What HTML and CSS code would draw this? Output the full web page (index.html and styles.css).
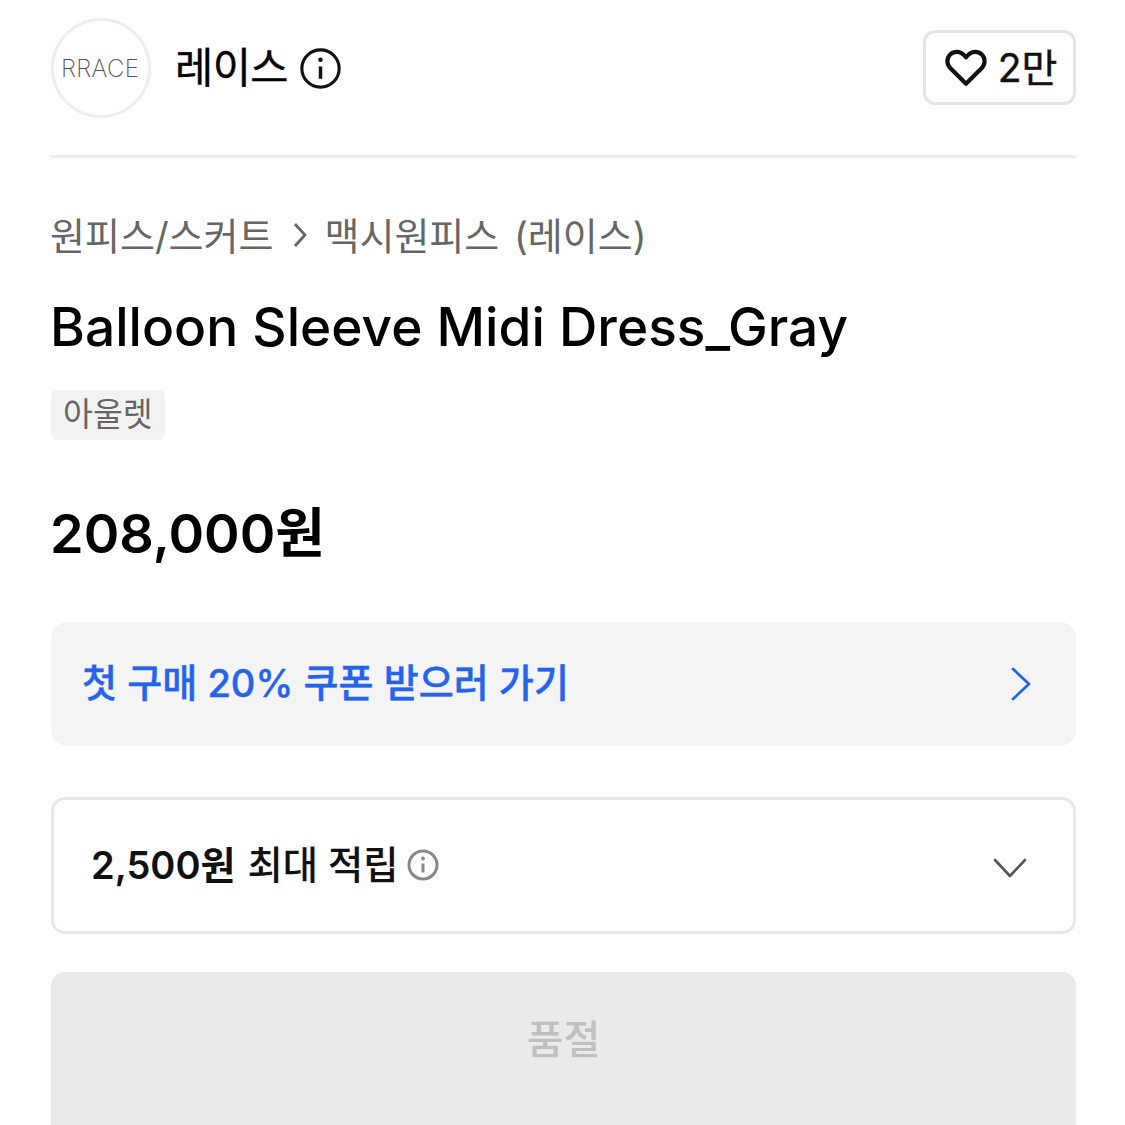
FILE: index.html
```html
<!DOCTYPE html>
<html lang="ko">
<head>
<meta charset="utf-8">
<title>Balloon Sleeve Midi Dress_Gray</title>
<link rel="stylesheet" href="styles.css">
</head>
<body>
<main class="page">
  <header class="brand">
    <div class="brand-left">
      <div class="avatar"><span class="avatar-text">RRACE</span></div>
      <span class="brand-name">레이스</span>
      <svg class="info-lg" viewBox="0 0 40 40" fill="none" stroke="#111" stroke-width="3">
        <circle cx="20" cy="20" r="18.2"/>
        <path d="M20 18v12" stroke-width="3.4"/>
        <circle cx="20" cy="11.5" r="2.2" fill="#111" stroke="none"/>
      </svg>
    </div>
    <button class="like">
      <svg class="heart" viewBox="0 0 44 40" fill="none" stroke="#111" stroke-width="4.4" stroke-linejoin="round">
        <path d="M22 36.5 5.6 20.2C1.4 16 1.4 9.6 5.4 5.8 9.4 2 15.6 2.2 19.4 6L22 8.8 24.6 6C28.4 2.2 34.6 2 38.6 5.8 42.6 9.6 42.6 16 38.4 20.2Z"/>
      </svg>
      <span class="like-count">2만</span>
    </button>
  </header>

  <nav class="crumbs">
    <span>원피스/스커트</span>
    <svg class="crumb-sep" viewBox="0 0 14 26" fill="none" stroke="#666" stroke-width="2.8"><path d="M2 2l10 11L2 24"/></svg>
    <span>맥시원피스 (레이스)</span>
  </nav>

  <h1 class="title">Balloon Sleeve Midi Dress_Gray</h1>
  <div class="tag">아울렛</div>
  <div class="price">208,000원</div>

  <a class="coupon">
    <span class="coupon-text">첫 구매 20% 쿠폰 받으러 가기</span>
    <svg class="coupon-arrow" viewBox="0 0 20 34" fill="none" stroke="#2563eb" stroke-width="2.8" stroke-linecap="round" stroke-linejoin="round"><path d="M2 2l16 15L2 32"/></svg>
  </a>

  <div class="points">
    <div class="points-left">
      <b class="points-amount">2,500원</b>
      <span class="points-label">최대 적립</span>
      <svg class="info-sm" viewBox="0 0 32 32" fill="none" stroke="#888" stroke-width="3">
        <circle cx="16" cy="16" r="14"/>
        <path d="M16 14.5v9" stroke-width="3"/>
        <circle cx="16" cy="9.5" r="1.9" fill="#888" stroke="none"/>
      </svg>
    </div>
    <svg class="chev-down" viewBox="0 0 34 20" fill="none" stroke="#555" stroke-width="2.6" stroke-linecap="round" stroke-linejoin="round"><path d="M2 2l15 16L32 2"/></svg>
  </div>

  <button class="soldout">품절</button>
</main>
</body>
</html>
```
FILE: styles.css
```css
* { box-sizing: border-box; }
html, body { margin: 0; padding: 0; background: #fff; }
body {
  width: 1125px;
  height: 1125px;
  overflow: hidden;
  font-family: Inter, "Noto Sans CJK KR", sans-serif;
  color: #000;
}
.page { padding: 18px 49px 0 51px; }
.brand {
  display: flex;
  justify-content: space-between;
  align-items: center;
  padding-bottom: 37px;
  border-bottom: 3px solid #eeeeee;
}
.brand-left { display: flex; align-items: center; }
.avatar {
  width: 100px;
  height: 100px;
  border: 3px solid #eeeeee;
  border-radius: 50%;
  display: flex;
  align-items: center;
  justify-content: center;
}
.avatar-text {
  margin-right: 2px;
  font-size: 24px;
  font-weight: 200;
  letter-spacing: 0.3px;
  color: #555;
}
.brand-name {
  margin-left: 24px;
  font-size: 41.5px;
  font-weight: 400;
  line-height: 48px;
  color: #000;
  letter-spacing: -0.5px;
  -webkit-text-stroke: 0.4px #000;
}
.info-lg { width: 41px; height: 41px; margin-left: 12px; }
.like {
  width: 153px;
  height: 75px;
  margin-bottom: 1px;
  border: 3px solid #e4e4e4;
  border-radius: 12px;
  background: #fff;
  display: flex;
  align-items: center;
  justify-content: center;
  gap: 11px;
  font: inherit;
  color: #111;
  padding: 0 0 0 3px;
}
.like-count {
  font-size: 39px;
  font-weight: 400;
  -webkit-text-stroke: 0.4px #111;
  margin-bottom: 6px;
}
.heart { width: 42px; height: 38px; }
.crumbs {
  display: flex;
  align-items: center;
  margin-top: 48px;
  height: 54px;
  font-size: 38px;
  word-spacing: 4px;
  color: #666;
  white-space: nowrap;
}
.crumbs > span:first-child { margin-left: -1px; }
.crumb-sep { width: 14px; height: 26px; margin: 3px 17px 0 20px; }
.title {
  margin: 30px 0 0 -1px;
  font-size: 53.2px;
  line-height: 74px;
  font-weight: 500;
  white-space: nowrap;
}
.tag {
  display: block;
  width: fit-content;
  margin-top: 26px;
  height: 50px;
  padding: 0 12px;
  background: #f2f2f2;
  border-radius: 6px;
  font-size: 32.5px;
  line-height: 50px;
  color: #666;
}
.price {
  margin: 56px 0 0 -1px;
  font-size: 54px;
  line-height: 76px;
  font-weight: 600;
}
.coupon {
  display: flex;
  align-items: center;
  justify-content: space-between;
  margin-top: 50px;
  height: 124px;
  padding: 0 45px 0 31px;
  background: #f4f4f5;
  border-radius: 16px;
  font-size: 38.1px;
  font-weight: 500;
  -webkit-text-stroke: 0.4px #2563eb;
  color: #2563eb;
}
.coupon-text { margin-bottom: 8px; }
.coupon-arrow { width: 20px; height: 34px; }
.points {
  display: flex;
  align-items: center;
  justify-content: space-between;
  margin-top: 51px;
  height: 137px;
  padding: 0 46px 0 37px;
  border: 3px solid #e8e8e8;
  border-radius: 14px;
}
.points-left { display: flex; align-items: center; margin-bottom: 2px; font-size: 38px; color: #111; }
.points-amount { font-weight: 600; margin-bottom: 4px; }
.points-label { margin-left: 12px; font-size: 38.3px; font-weight: 500; margin-bottom: 4px; }
.info-sm { width: 32px; height: 32px; margin-left: 8px; }
.chev-down { width: 34px; height: 20px; margin-top: 4px; }
.soldout {
  display: block;
  width: 100%;
  margin-top: 38px;
  height: 180px;
  border: 0;
  border-radius: 14px;
  background: #eaeaea;
  font: inherit;
  font-size: 40px;
  font-weight: 500;
  color: #c0c0c0;
  padding: 0 0 50px;
}
```
